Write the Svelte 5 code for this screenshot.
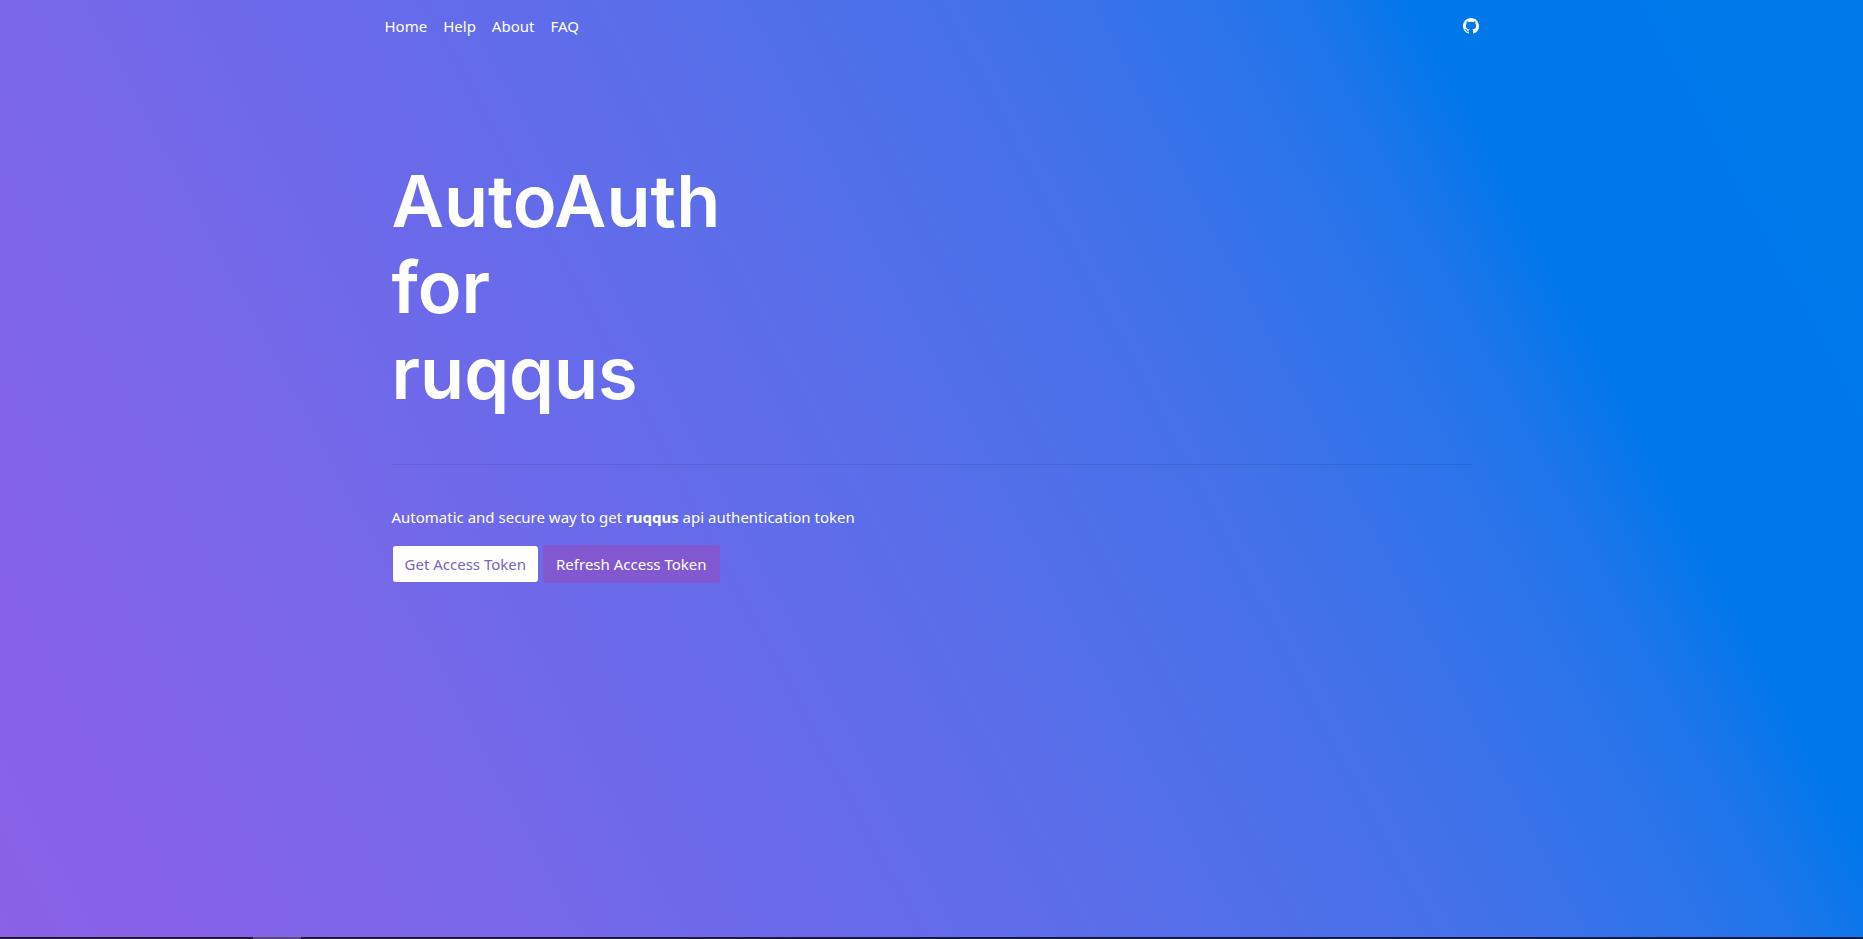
<script>
  const links = ['Home', 'Help', 'About', 'FAQ'];
</script>

<div class="page">
  <header>
    <nav aria-label="Main">
      {#each links as link}
        <a href="#{link.toLowerCase()}">{link}</a>
      {/each}
    </nav>
    <a class="github" href="#github" aria-label="GitHub">
      <svg viewBox="0 0 16 16" aria-hidden="true">
        <path
          fill="currentColor"
          fill-rule="evenodd"
          d="M8 0C3.58 0 0 3.58 0 8c0 3.54 2.29 6.53 5.47 7.59.4.07.55-.17.55-.38 0-.19-.01-.82-.01-1.49-2.01.37-2.53-.49-2.69-.94-.09-.23-.48-.94-.82-1.13-.28-.15-.68-.52-.01-.53.63-.01 1.08.58 1.23.82.72 1.21 1.87.87 2.33.66.07-.52.28-.87.51-1.07-1.78-.2-3.64-.89-3.64-3.95 0-.87.31-1.59.82-2.15-.08-.2-.36-1.02.08-2.12 0 0 .67-.21 2.2.82.64-.18 1.32-.27 2-.27s1.36.09 2 .27c1.53-1.04 2.2-.82 2.2-.82.44 1.1.16 1.92.08 2.12.51.56.82 1.27.82 2.15 0 3.07-1.87 3.75-3.65 3.95.29.25.54.73.54 1.48 0 1.07-.01 1.93-.01 2.2 0 .21.15.46.55.38A8.01 8.01 0 0 0 16 8c0-4.42-3.58-8-8-8z"
        />
      </svg>
    </a>
  </header>

  <main>
    <h1>AutoAuth<br />for<br />ruqqus</h1>
    <hr />
    <p>Automatic and secure way to get <strong>ruqqus</strong> api authentication token</p>
    <div class="actions">
      <button class="primary" type="button">Get Access Token</button>
      <button class="secondary" type="button">Refresh Access Token</button>
    </div>
  </main>

  <div class="strip"><span></span></div>
</div>

<style>
  :global(body) {
    margin: 0;
  }

  .page {
    box-sizing: border-box;
    min-height: 100vh;
    display: flex;
    flex-direction: column;
    color: #fff;
    font: 15px/24px 'Noto Sans', 'Open Sans', sans-serif;
    background: linear-gradient(
      62deg,
      #8a61e7 0%,
      #8463e8 10%,
      #7b67e8 19%,
      #6a6aea 34%,
      #5a6eea 48%,
      #4a70e9 58%,
      #4171e9 64%,
      #2c74ea 72%,
      #1f75ea 76%,
      #0077eb 81%,
      #007aeb 100%
    );
  }

  header {
    box-sizing: border-box;
    width: 100%;
    max-width: 1126px;
    margin: 0 auto;
    padding: 14px 16px;
    display: flex;
    align-items: center;
    justify-content: space-between;
  }

  nav {
    display: flex;
    gap: 16px;
  }

  a {
    color: #fff;
    text-decoration: none;
  }

  .github svg {
    display: block;
    width: 16px;
    height: 16px;
  }

  main {
    box-sizing: border-box;
    width: 100%;
    max-width: 1112px;
    margin: 0 auto;
    padding: 106px 16px 48px;
    flex: 1;
  }

  h1 {
    margin: 0;
    font: 600 72px/86px Inter, sans-serif;
  }

  hr {
    margin: 48px 0 40px;
    border: 0;
    border-top: 1px solid rgba(0, 0, 0, 0.1);
  }

  p {
    margin: 0 0 16px;
  }

  .actions {
    display: flex;
    gap: 4px;
  }

  button {
    height: 38px;
    padding: 0 12px;
    border: 1px solid transparent;
    border-radius: 4px;
    font: inherit;
    cursor: pointer;
  }

  .primary {
    color: #7a62b8;
    background: #fff;
    background-clip: padding-box;
  }

  .secondary {
    color: #fff;
    background: #8258d0;
  }

  .strip {
    height: 2px;
    background: linear-gradient(90deg, #231238, #0b1a40);
  }

  .strip span {
    display: block;
    width: 48px;
    height: 2px;
    margin-left: 253px;
    background: #5c477c;
  }
</style>
